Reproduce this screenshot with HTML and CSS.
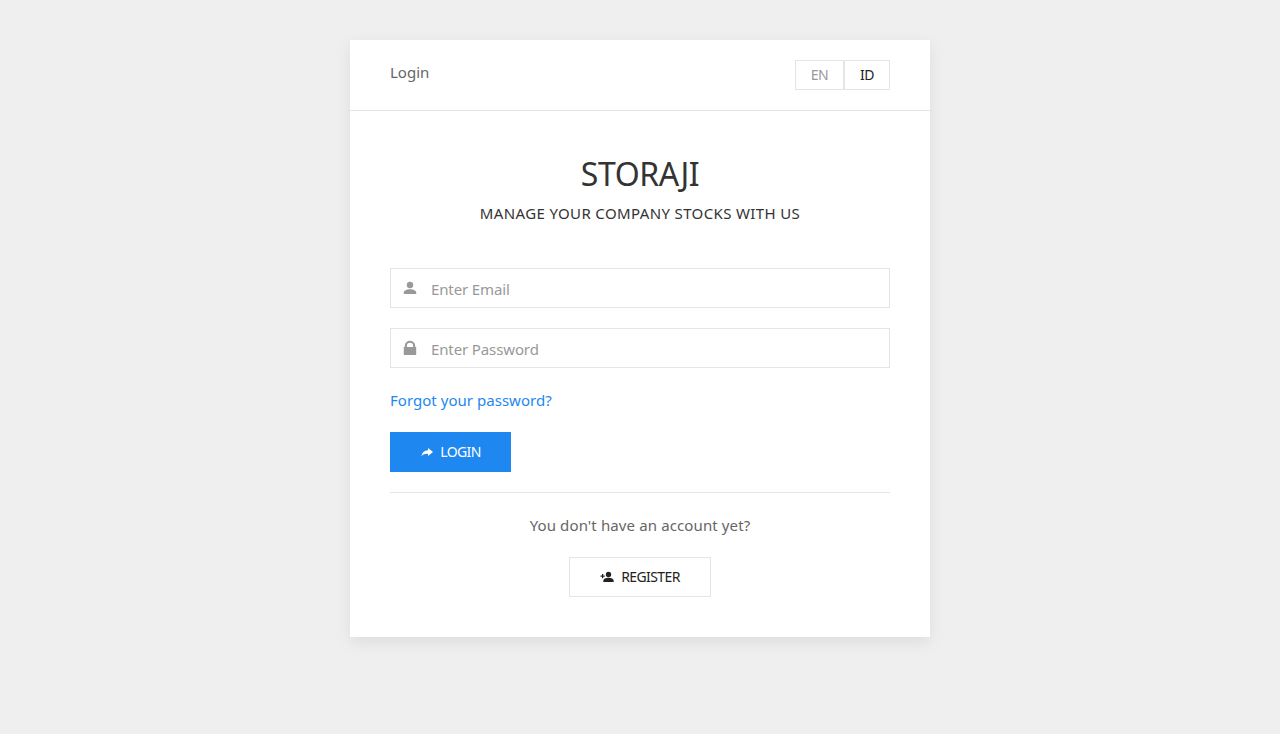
FILE: index.html
```html
<!DOCTYPE html>
<html lang="en">
<head>
<meta charset="utf-8">
<title>Storaji</title>
<link rel="stylesheet" href="styles.css">
</head>
<body>
<main class="card">
  <header class="card-header">
    <span class="page-name">Login</span>
    <nav class="languages">
      <a class="language muted" href="#">EN</a>
      <a class="language" href="#">ID</a>
    </nav>
  </header>
  <section class="card-body">
    <h1 class="brand">STORAJI</h1>
    <p class="tagline">MANAGE YOUR COMPANY STOCKS WITH US</p>
    <form class="form">
      <label class="field">
        <svg class="field-icon" viewBox="0 0 18 18"><circle cx="9" cy="6" r="3.200"/><path d="M2.800 15v-1.500c0-2 2.700-3.300 6.200-3.300s6.200 1.300 6.200 3.300V15z"/></svg>
        <input class="input" type="email" placeholder="Enter Email">
      </label>
      <label class="field">
        <svg class="field-icon" viewBox="0 0 18 18"><path d="M2.800 16V8h1V6.700a5.200 4.900 0 0 1 10.400 0V8h1v8zM5.900 8h6.200V6.700a3.100 3 0 0 0-6.200 0z"/></svg>
        <input class="input password" type="password" placeholder="Enter Password">
      </label>
      <a class="forgot" href="#">Forgot your password?</a>
      <button class="button primary" type="button">
        <svg class="button-icon" viewBox="0 0 14 14"><path d="M8 3l5 4-5 4V8.700C5 8.600 3 9.300 1.500 11.200 2 8 4 5.600 8 5.300z"/></svg>
        <span class="login-text">LOGIN</span>
      </button>
    </form>
    <footer class="signup">
      <p class="question">You don't have an account yet?</p>
      <button class="button outline" type="button">
        <svg class="button-icon" viewBox="0 0 14 14"><circle cx="8.500" cy="4.500" r="2.700"/><path d="M3.300 12v-1.300C3.300 8.900 5.700 7.800 8.500 7.800s5.200 1.100 5.200 2.900V12zM2 4h1.200v1.500h1.500v1.200H3.200v1.500H2V6.700H.5V5.500H2z"/></svg>
        <span class="register-text">REGISTER</span>
      </button>
    </footer>
  </section>
</main>
</body>
</html>
```
FILE: styles.css
```css
* { box-sizing: border-box; }
body {
  margin: 0;
  min-height: 734px;
  padding-top: 40px;
  background: #efefef;
  color: #666;
  font: 15px/24px "Noto Sans", sans-serif;
}
.card {
  width: 580px;
  height: 597px;
  margin: 0 auto;
  background: #fff;
  box-shadow: 0 5px 15px rgba(0, 0, 0, .08);
}
.card-header {
  display: flex;
  justify-content: space-between;
  height: 71px;
  padding: 20px 40px;
  border-bottom: 1px solid #e5e5e5;
}
.languages { display: flex; }
.language {
  width: 46px;
  height: 30px;
  border: 1px solid #e5e5e5;
  color: #222;
  font-size: 14px;
  letter-spacing: -.4px;
  line-height: 28px;
  text-align: center;
  text-decoration: none;
}
.muted { width: 49px; color: #999; }
.card-body { padding: 40px; }
.brand {
  margin: 0;
  color: #333;
  font-size: 32px;
  font-weight: 400;
  letter-spacing: -.4px;
  line-height: 45px;
  text-align: center;
}
.tagline {
  margin: 5px 0 42px;
  color: #333;
  letter-spacing: .37px;
  text-align: center;
  line-height: 25px;
}
.form {
  display: flex;
  flex-direction: column;
  align-items: flex-start;
  padding-bottom: 20px;
  border-bottom: 1px solid #e5e5e5;
}
.field {
  display: flex;
  width: 100%;
  height: 40px;
  margin-bottom: 20px;
  padding-left: 10px;
  border: 1px solid #e5e5e5;
}
.field-icon { width: 18px; height: 18px; margin-top: 10px; fill: #999; }
.input {
  flex: 1;
  min-width: 0;
  margin-left: 12px;
  padding: 2px 0 0;
  border: 0;
  outline: 0;
  background: transparent;
  font: inherit;
  letter-spacing: -.12px;
}
.input::placeholder { color: #999; opacity: 1; }
.forgot { height: 24px; margin-bottom: 20px; color: #1e87f0; letter-spacing: .03px; text-decoration: none; }
.button {
  display: flex;
  align-items: center;
  justify-content: center;
  gap: 6px;
  height: 40px;
  padding: 0;
  border: 0;
  font: 14px/38px "Noto Sans", sans-serif;
}
.button-icon { width: 14px; height: 14px; fill: currentColor; }
.primary { width: 121px; background: #1e87f0; color: #fff; }
.login-text { letter-spacing: -.6px; }
.register-text { letter-spacing: -.6px; }
.signup { display: flex; flex-direction: column; align-items: center; padding-top: 20px; }
.question { margin: 0 0 20px; letter-spacing: .12px; }
.outline { width: 142px; gap: 7px; border: 1px solid #e5e5e5; background: transparent; color: #222; }
```
